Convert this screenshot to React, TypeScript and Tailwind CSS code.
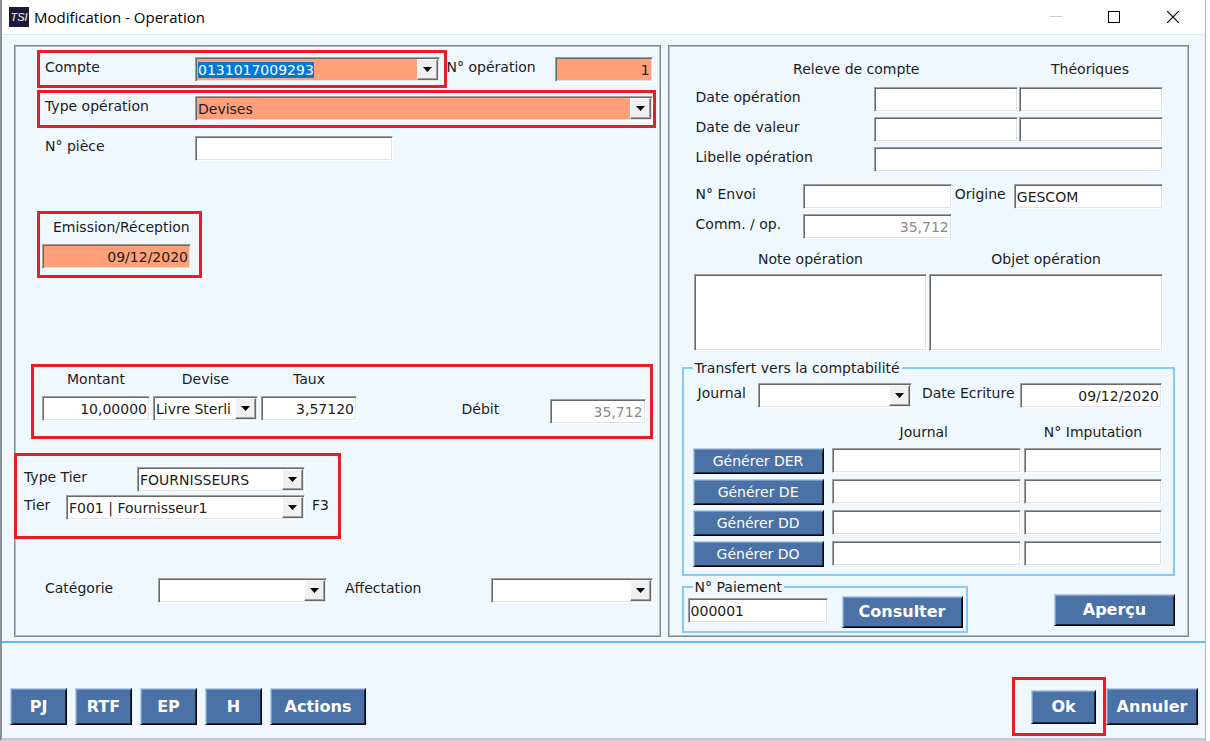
import { useEffect, useId, useRef, type ReactNode } from "react";
import clsx from "clsx";

const FIELD =
  "block h-[25px] min-w-0 rounded-none border border-t-[#a0a0a0] border-l-[#a0a0a0] border-r-white border-b-white px-0.5 text-[14px] leading-5 outline-none shadow-[inset_1px_1px_0_#696969,inset_-1px_-1px_0_#e3e3e3]";

const BUTTON =
  "border border-t-[#b9cde4] border-l-[#b9cde4] border-r-black border-b-black bg-[#4a72a6] text-white shadow-[inset_1px_1px_0_#7b9cc5,inset_-1px_-1px_0_#1b2c44]";

const PANEL = "border border-[#85888b] shadow-[inset_0_0_0_1px_#b4babf]";

function Label({ htmlFor, className, children }: { htmlFor?: string; className?: string; children: ReactNode }) {
  return (
    <label htmlFor={htmlFor} className={clsx("block whitespace-nowrap text-[14px] leading-5", className)}>
      {children}
    </label>
  );
}

function Field({
  id,
  value,
  label,
  required,
  disabled,
  right,
  className,
}: {
  id?: string;
  value?: string;
  label?: string;
  required?: boolean;
  disabled?: boolean;
  right?: boolean;
  className?: string;
}) {
  return (
    <input
      id={id}
      type="text"
      aria-label={label}
      defaultValue={value}
      disabled={disabled}
      className={clsx(
        FIELD,
        required ? "bg-[#ffa07a]" : "bg-white",
        disabled && "text-[#8a8a8a]",
        right && "text-right",
        className
      )}
    />
  );
}

function Arrow() {
  return (
    <span className="pointer-events-none absolute top-0.5 right-0.5 flex h-[21px] w-[21px] items-center justify-center border border-t-white border-l-white border-r-[#696969] border-b-[#696969] bg-[#f0f0f0] shadow-[inset_-1px_-1px_0_#a0a0a0]">
      <svg width="9" height="5" viewBox="0 0 9 5" aria-hidden="true">
        <path d="M0 0h9L4.5 5z" fill="#000" />
      </svg>
    </span>
  );
}

function Combo({ id, value = "", required, className }: { id: string; value?: string; required?: boolean; className?: string }) {
  return (
    <div className={clsx("relative min-w-0", className)}>
      <select
        id={id}
        defaultValue={value}
        className={clsx(FIELD, "w-full appearance-none pr-[26px]", required ? "bg-[#ffa07a]" : "bg-white")}
      >
        <option value={value}>{value}</option>
      </select>
      <Arrow />
    </div>
  );
}

function CompteCombo({ id }: { id: string }) {
  const ref = useRef<HTMLInputElement>(null);

  useEffect(() => {
    ref.current?.focus();
    ref.current?.select();
  }, []);

  return (
    <div className="relative min-w-0 flex-1">
      <input
        ref={ref}
        id={id}
        role="combobox"
        aria-expanded={false}
        defaultValue="0131017009293"
        className={clsx(FIELD, "w-full bg-[#ffa07a] pr-[26px] selection:bg-[#0078d7] selection:text-white")}
      />
      <Arrow />
    </div>
  );
}

function Highlight({ className, children }: { className?: string; children: ReactNode }) {
  return <div className={clsx("border-[3px] border-[#ed1c24]", className)}>{children}</div>;
}

function BigButton({ className, children }: { className?: string; children: ReactNode }) {
  return (
    <button type="button" className={clsx(BUTTON, "text-[16px] leading-5 font-bold", className)}>
      {children}
    </button>
  );
}

function Column({ label, className, children }: { label: string; className?: string; children: (id: string) => ReactNode }) {
  const id = useId();
  return (
    <div className={clsx("flex flex-col gap-[7px]", className)}>
      <Label htmlFor={id} className="text-center">
        {label}
      </Label>
      {children(id)}
    </div>
  );
}

function TitleBar() {
  return (
    <header className="flex h-[35px] items-center border-b border-[#dbe6f2] bg-white pl-[7px]">
      <span className="flex h-5 w-5 items-center justify-center bg-[#1b1b38] font-['Liberation_Sans',sans-serif] text-[11px] italic text-white">
        TSI
      </span>
      <h1 className="ml-[5px] font-['Open_Sans',sans-serif] text-[15px] leading-5 text-black">Modification - Operation</h1>
      <div className="mr-0.5 ml-auto flex">
        <button type="button" aria-label="Réduire" className="flex h-8 w-[58px] items-center justify-center">
          <svg width="12" height="12" viewBox="0 0 12 12" stroke="#c4c4c4">
            <path d="M0 5.5h12" />
          </svg>
        </button>
        <button type="button" aria-label="Agrandir" className="flex h-8 w-[58px] items-center justify-center">
          <svg width="12" height="12" viewBox="0 0 12 12" fill="none" stroke="#000">
            <rect x="0.5" y="0.5" width="11" height="11" />
          </svg>
        </button>
        <button type="button" aria-label="Fermer" className="flex h-8 w-[60px] items-center justify-center">
          <svg width="12" height="12" viewBox="0 0 12 12" fill="none" stroke="#000" strokeWidth="1.2">
            <path d="M0 0l12 12M12 0L0 12" />
          </svg>
        </button>
      </div>
    </header>
  );
}

function OperationPanel() {
  return (
    <section className={clsx(PANEL, "flex-[647] px-px pt-1 pb-[33px]")}>
      <div className="flex">
        <Highlight className="ml-[21px] flex flex-1 items-start pt-1 pr-1 pb-[3px] pl-[5px]">
          <Label htmlFor="compte" className="w-[150px]">
            Compte
          </Label>
          <CompteCombo id="compte" />
        </Highlight>
        <div className="flex items-start pt-[7px] pr-1.5">
          <Label htmlFor="operation" className="w-[108px]">
            N° opération
          </Label>
          <Field id="operation" value="1" required right className="w-[98px]" />
        </div>
      </div>

      <Highlight className="mt-0.5 mr-[3px] ml-[21px] flex items-start pt-[3px] pr-0 pb-1 pl-[5px]">
        <Label htmlFor="type-operation" className="w-[150px]">
          Type opération
        </Label>
        <Combo id="type-operation" value="Devises" required className="flex-1" />
      </Highlight>

      <div className="mt-2 ml-[29px] flex items-start">
        <Label htmlFor="piece" className="w-[150px]">
          N° pièce
        </Label>
        <Field id="piece" className="w-[198px]" />
      </div>

      <Highlight className="mt-[50px] ml-[21px] flex w-[165px] flex-col gap-[7px] px-0.5 pt-[3px] pb-1.5">
        <Label htmlFor="emission" className="pl-[11px]">
          Emission/Réception
        </Label>
        <Field id="emission" value="09/12/2020" required right className="w-[149px]" />
      </Highlight>

      <Highlight className="mt-[86px] mr-1.5 ml-[15px] flex items-start gap-[3px] pt-0.5 pr-1 pb-3 pl-2">
        <Column label="Montant" className="w-[108px]">
          {(id) => <Field id={id} value="10,00000" right />}
        </Column>
        <Column label="Devise" className="w-[105px]">
          {(id) => <Combo id={id} value="Livre Sterling" />}
        </Column>
        <Column label="Taux" className="w-[96px]">
          {(id) => <Field id={id} value="3,57120" right />}
        </Column>
        <div className="mt-[30px] ml-auto flex items-start">
          <Label htmlFor="debit" className="w-[88px]">
            Débit
          </Label>
          <Field id="debit" value="35,712" disabled right className="w-[96px]" />
        </div>
      </Highlight>

      <Highlight className="mt-3.5 -ml-0.5 flex w-[327px] flex-col gap-[3px] pt-[11px] pb-4 pl-[7px]">
        <div className="flex items-start">
          <Label htmlFor="type-tier" className="w-[113px]">
            Type Tier
          </Label>
          <Combo id="type-tier" value="FOURNISSEURS" className="w-[168px]" />
        </div>
        <div className="flex items-start">
          <Label htmlFor="tier" className="w-[42px]">
            Tier
          </Label>
          <Combo id="tier" value="F001 | Fournisseur1" className="w-[239px]" />
          <span className="ml-[7px] text-[14px] leading-5">F3</span>
        </div>
      </Highlight>

      <div className="mt-[39px] mr-1.5 ml-[29px] flex items-start">
        <Label htmlFor="categorie" className="w-[113px]">
          Catégorie
        </Label>
        <Combo id="categorie" className="w-[169px]" />
        <Label htmlFor="affectation" className="ml-[18px] flex-1">
          Affectation
        </Label>
        <Combo id="affectation" className="w-[162px]" />
      </div>
    </section>
  );
}

const ecritures = ["Générer DER", "Générer DE", "Générer DD", "Générer DO"];

function Transfert() {
  return (
    <fieldset className="mx-3 border-2 border-[#8cc6ff] pr-[11px] pb-[7px] pl-[9px]">
      <legend className="px-0.5 text-[14px] leading-5 whitespace-nowrap">Transfert vers la comptabilité</legend>
      <div className="mt-[5px] flex items-start pl-[5px]">
        <Label htmlFor="journal" className="w-[60px]">
          Journal
        </Label>
        <Combo id="journal" className="flex-1" />
        <Label htmlFor="date-ecriture" className="ml-2.5 w-[98px]">
          Date Ecriture
        </Label>
        <Field id="date-ecriture" value="09/12/2020" right className="w-[142px]" />
      </div>

      <div className="mt-[13px] grid grid-cols-[131px_1fr_138px] gap-x-[3px] gap-y-[5px]">
        <span />
        <span className="text-center text-[14px] leading-[22px]">Journal</span>
        <span className="text-center text-[14px] leading-[22px]">N° Imputation</span>
        {ecritures.map((name) => (
          <div key={name} className="contents">
            <button type="button" className={clsx(BUTTON, "h-[26px] text-[14px] leading-5")}>
              {name}
            </button>
            <Field label={`${name} : journal`} className="ml-[5px]" />
            <Field label={`${name} : imputation`} />
          </div>
        ))}
      </div>
    </fieldset>
  );
}

function RelevePanel() {
  return (
    <section className={clsx(PANEL, "flex-[521] px-px pt-[13px]")}>
      <div className="mr-6 ml-[26px]">
        <div className="flex text-center text-[14px] leading-5">
          <span className="flex-1">Releve de compte</span>
          <span className="w-[146px]">Théoriques</span>
        </div>

        <div className="mt-2 grid grid-cols-[177px_1fr_1fr] items-start gap-x-px gap-y-[5px]">
          <Label htmlFor="date-operation">Date opération</Label>
          <Field id="date-operation" />
          <Field label="Date opération théorique" />
          <Label htmlFor="date-valeur">Date de valeur</Label>
          <Field id="date-valeur" />
          <Field label="Date de valeur théorique" />
          <Label htmlFor="libelle">Libelle opération</Label>
          <Field id="libelle" className="col-span-2" />
        </div>

        <div className="mt-3 grid grid-cols-[107px_1fr_62px_1fr] items-start gap-y-[5px]">
          <Label htmlFor="envoi">N° Envoi</Label>
          <Field id="envoi" />
          <Label htmlFor="origine" className="pl-[3px]">
            Origine
          </Label>
          <Field id="origine" value="GESCOM" />
          <Label htmlFor="commission">Comm. / op.</Label>
          <Field id="commission" value="35,712" disabled right />
        </div>

        <div className="mt-2.5 -ml-0.5 grid grid-cols-2 gap-x-0.5 gap-y-[5px]">
          <Label htmlFor="note" className="text-center">
            Note opération
          </Label>
          <Label htmlFor="objet" className="text-center">
            Objet opération
          </Label>
          <textarea id="note" className={clsx(FIELD, "h-[77px] w-full resize-none bg-white")} />
          <textarea id="objet" className={clsx(FIELD, "h-[77px] w-full resize-none bg-white")} />
        </div>
      </div>

      <div className="mt-[7px]">
        <Transfert />
      </div>

      <div className="mx-3 mt-0.5 flex items-start justify-between">
        <fieldset className="flex items-start gap-3.5 border-2 border-[#8cc6ff] pr-[3px] pb-[3px] pl-1">
          <legend className="ml-[5px] px-0.5 text-[14px] leading-[18px]">N° Paiement</legend>
          <input aria-label="N° Paiement" defaultValue="000001" className={clsx(FIELD, "mt-0.5 w-[140px] bg-white")} />
          <BigButton className="h-8 w-[121px]">Consulter</BigButton>
        </fieldset>
        <BigButton className="mt-4 h-8 w-[121px]">Aperçu</BigButton>
      </div>
    </section>
  );
}

export default function App() {
  return (
    <div className="min-h-screen bg-white pr-1 font-['DejaVu_Sans',sans-serif] text-[#1c1c1c]">
      <div className="min-h-screen border-r border-b-[3px] border-l-2 border-r-[#b4b8c4] border-b-[#c6c9ce] border-l-[#8c9094] bg-[#f0f8ff]">
        <TitleBar />
        <main className="mt-2.5 mr-4 ml-3 flex gap-[7px]">
          <OperationPanel />
          <RelevePanel />
        </main>
        <footer className="mt-1 flex items-start border-t-2 border-[#66b3ff] pt-[34px] pb-px pl-2">
          <div className="mt-[11px] flex gap-2">
            <BigButton className="h-[37px] w-[57px]">PJ</BigButton>
            <BigButton className="h-[37px] w-[57px]">RTF</BigButton>
            <BigButton className="h-[37px] w-[57px]">EP</BigButton>
            <BigButton className="h-[37px] w-[57px]">H</BigButton>
            <BigButton className="h-[37px] w-24">Actions</BigButton>
          </div>
          <Highlight className="ml-auto pt-2.5 pr-[7px] pb-[9px] pl-4">
            <BigButton className="block h-[34px] w-[65px]">Ok</BigButton>
          </Highlight>
          <BigButton className="mt-[11px] mr-[7px] h-[37px] w-[92px]">Annuler</BigButton>
        </footer>
      </div>
    </div>
  );
}
